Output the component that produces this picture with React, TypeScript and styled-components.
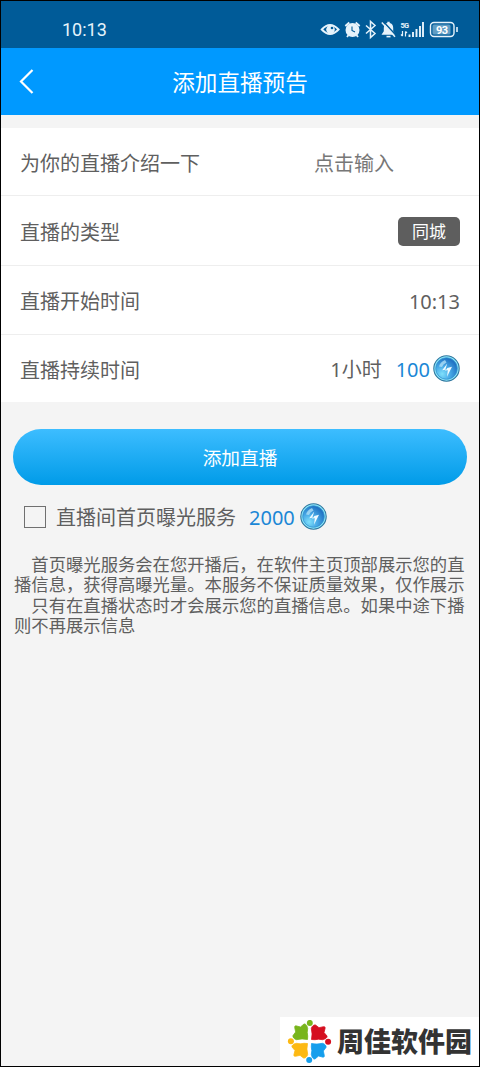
import React from "react";
import styled, { createGlobalStyle } from "styled-components";

const Global = createGlobalStyle`
  * { box-sizing: border-box; }
  body { margin: 0; background: #f4f4f4; font-family: "Noto Sans", "Noto Sans CJK SC", sans-serif; }
`;

const Screen = styled.div`
  position: relative;
  width: 480px;
  height: 1067px;
  border: 1px solid #000;
  background: #f4f4f4;
  color: #5f5f5f;
  overflow: hidden;
`;

const StatusBar = styled.div`
  height: 47px;
  display: flex;
  justify-content: space-between;
  align-items: center;
  padding: 9px 20px 0 61px;
  background: #005b98;
  color: #e6f3fb;
`;

const Clock = styled.span`
  padding-top: 1px;
  font: 400 18px/22px Roboto, sans-serif;
`;

const Header = styled.header`
  height: 67px;
  display: grid;
  grid-template-columns: 60px 1fr 60px;
  align-items: center;
  background: #0099ff;
  color: #fff;
`;

const BackIcon = styled.svg`
  width: 18px;
  height: 28px;
  margin: 0 0 2px 17px;
`;

const Title = styled.h1`
  margin: 0;
  padding-top: 2px;
  text-align: center;
  font-size: 22.6px;
  font-weight: 400;
  line-height: 32px;
`;

const List = styled.section`
  margin-top: 13px;
  background: #fff;
`;

const Row = styled.div<{ $height: number }>`
  height: ${(p) => p.$height}px;
  display: flex;
  align-items: center;
  justify-content: space-between;
  padding: 0 19px;
  font-size: 20px;
  line-height: 28px;
  & + & { border-top: 1px solid #eeeeee; }
`;

const Label = styled.span`
  padding-top: 4px;
`;

const Placeholder = styled.span`
  width: 146px;
  padding-top: 4px;
  color: #777;
`;

const Value = styled.span`
  display: flex;
  align-items: center;
`;

const Text = styled.span`
  padding-top: 3px;
`;

const Tag = styled.span`
  width: 62px;
  height: 29px;
  margin-top: 1px;
  border-radius: 5px;
  background: #5e5e5e;
  color: #fff;
  text-align: center;
  font-size: 17px;
  line-height: 30px;
`;

const Price = styled.span<{ $before: number; $gap: number }>`
  display: flex;
  align-items: center;
  gap: ${(p) => p.$gap}px;
  margin-left: ${(p) => p.$before}px;
  color: #1b87d6;
`;

const Submit = styled.button`
  display: block;
  width: 454px;
  height: 56px;
  margin: 27px 0 0 12px;
  padding: 0;
  border: 0;
  border-radius: 28px;
  background: linear-gradient(#3dbdff, #009be8);
  color: #fff;
  font: 400 18.7px/58px "Noto Sans", "Noto Sans CJK SC", sans-serif;
`;

const Service = styled.label`
  height: 30px;
  margin: 16px 0 0 23px;
  display: flex;
  align-items: center;
  font-size: 20px;
  line-height: 28px;
`;

const Box = styled.span`
  width: 22px;
  height: 22px;
  margin: 1px 10px 0 0;
  border: 1px solid #707070;
`;

const Notes = styled.div`
  margin: 23px 0 0 13px;
  font-size: 17.34px;
  line-height: 20.4px;
  white-space: nowrap;
`;

const Line = styled.p<{ $indent?: boolean }>`
  margin: 0;
  text-indent: ${(p) => (p.$indent ? "1em" : "0")};
`;

const Watermark = styled.div`
  position: absolute;
  right: -1px;
  bottom: -1px;
  width: 200px;
  height: 50px;
  display: flex;
  align-items: center;
  gap: 5px;
  padding-left: 7px;
  background: #fff;
  color: #333;
  font-size: 27px;
  font-weight: 900;
  white-space: nowrap;
`;

const Brand = styled.span`
  line-height: 40px;
`;

const StatusIcons = () => (
  <svg width="140" height="24" viewBox="319 17 140 24" fill="none" stroke="#e6f3fb" strokeWidth="1.6">
    <path d="M321.800 29.500Q330 20.500 338.500 29.500Q330 38.500 321.800 29.500Z" strokeWidth="2" />
    <circle cx="330.500" cy="29.500" r="4.300" fill="#e6f3fb" stroke="none" />
    <circle cx="332" cy="28" r="1.300" fill="#005b98" stroke="none" />
    <circle cx="352.500" cy="30" r="7" fill="#e6f3fb" stroke="none" />
    <path d="M345.300 26l4-3.500M359.700 26l-4-3.500M348.500 35l-1.500 2M356.500 35l1.500 2" strokeWidth="1.800" />
    <path d="M352 26.500v4l3 1.500" stroke="#005b98" strokeWidth="1.100" />
    <path d="M366 25.500l9 8-4.500 4V21.500l4.500 4-9 8" strokeWidth="1.500" />
    <path d="M381.500 34.800h14l-2.300-3.500v-3.300c0-3-1.500-4.500-3.500-5v-1.200h-2.400v1.200c-2 .5-3.500 2-3.500 5v3.300z" fill="#e6f3fb" stroke="none" />
    <path d="M386.500 36.600h4" />
    <path d="M383.500 21.800l13 14" stroke="#005b98" strokeWidth="1.400" />
    <path d="M381.800 22.500l13.200 14.300" strokeWidth="1.500" />
    <text x="400.500" y="27.500" fill="#e6f3fb" stroke="none" fontSize="7.500" fontWeight="700" fontFamily="Roboto" textLength="8.500">5G</text>
    <path d="M402.500 31v5M401 34.500l1.500 1.700M405.500 36.500v-5M407 33l-1.500-1.700" strokeWidth="1.200" />
    <path d="M409.500 37v-2.500M413 37v-5M416.500 37v-8M420 37V26M423 37V22" strokeWidth="1.900" />
    <rect x="430.500" y="22.500" width="23.500" height="14" rx="3.500" strokeWidth="1.400" />
    <rect x="432.500" y="24.500" width="18" height="10" rx="1.500" fill="#5f9dc4" stroke="none" />
    <path d="M457 27v5" strokeWidth="1.600" />
    <text x="436" y="33.500" fill="#fff" stroke="none" fontSize="11" fontWeight="700" fontFamily="Roboto" textLength="12">93</text>
  </svg>
);

const Coin = () => (
  <svg width="27" height="27" viewBox="0 0 27 27">
    <defs>
      <radialGradient id="coin" cx=".3" cy=".75" r=".75">
        <stop offset="0" stopColor="#7fe0fb" />
        <stop offset=".5" stopColor="#48a9e6" />
        <stop offset="1" stopColor="#2173c4" />
      </radialGradient>
    </defs>
    <circle cx="13.500" cy="13.500" r="12.700" fill="#8ee7fa" stroke="#31779f" strokeWidth="1.100" />
    <circle cx="13.500" cy="13.500" r="10.800" fill="url(#coin)" stroke="#3596d0" strokeWidth=".8" />
    <path d="M6 11.500q1-4.500 6-6.500l1.500 2.500-3 2-1.500 2.500z" fill="#b5e3f8" opacity=".75" />
    <path d="M14.200 8.500l-5 6.800 4.300-.8.800-1.500 4.700-1.200-5 10 .8-6.500-2.800.3z" fill="#f0fbff" />
  </svg>
);

const petal =
  "M1.800-13C2.500-15.500 4.500-17 6-16.500L9.500-13.800 14-14.800C15.500-15 16-14 15.500-12.800L14.500-9 17.500-5.500C18-4 16-2.300 13-1.800Q9-2.800 5.500-1.800L2-2Q3.300-7.500 1.800-13Z";

const petals = [
  { color: "#d50f20", turn: 0 },
  { color: "#159eec", turn: 90 },
  { color: "#fdb913", turn: 180 },
  { color: "#78b51c", turn: 270 },
];

const Logo = () => (
  <svg width="45" height="44" viewBox="-22.500 -21.500 45 44">
    {petals.map((p) => (
      <g key={p.turn} fill={p.color} transform={`rotate(${p.turn})`}>
        <path d={petal} stroke={p.color} strokeWidth=".8" strokeLinejoin="round" />
        <circle cx="18.600" cy="0.300" r="3" stroke="#fff" strokeWidth="1" paintOrder="stroke" />
      </g>
    ))}
  </svg>
);

export default function App() {
  return (
    <>
      <Global />
      <Screen>
        <StatusBar>
          <Clock>10:13</Clock>
          <StatusIcons />
        </StatusBar>
        <Header>
          <BackIcon viewBox="0 0 18 28" fill="none" stroke="#fff" strokeWidth="2.200">
            <path d="M14.500 3L3 14.500 14.500 26" />
          </BackIcon>
          <Title>添加直播预告</Title>
        </Header>
        <List>
          <Row $height={67}>
            <Label>为你的直播介绍一下</Label>
            <Placeholder>点击输入</Placeholder>
          </Row>
          <Row $height={70}>
            <Label>直播的类型</Label>
            <Tag>同城</Tag>
          </Row>
          <Row $height={69}>
            <Label>直播开始时间</Label>
            <Value><Text>10:13</Text></Value>
          </Row>
          <Row $height={68}>
            <Label>直播持续时间</Label>
            <Value>
              <Text>1小时</Text>
              <Price $before={14} $gap={3}><Text>100</Text><Coin /></Price>
            </Value>
          </Row>
        </List>
        <Submit>添加直播</Submit>
        <Service>
          <Box />
          <Text>直播间首页曝光服务</Text>
          <Price $before={13} $gap={5}><Text>2000</Text><Coin /></Price>
        </Service>
        <Notes>
          <Line $indent>首页曝光服务会在您开播后，在软件主页顶部展示您的直</Line>
          <Line>播信息，获得高曝光量。本服务不保证质量效果，仅作展示</Line>
          <Line $indent>只有在直播状态时才会展示您的直播信息。如果中途下播</Line>
          <Line>则不再展示信息</Line>
        </Notes>
        <Watermark>
          <Logo />
          <Brand>周佳软件园</Brand>
        </Watermark>
      </Screen>
    </>
  );
}
